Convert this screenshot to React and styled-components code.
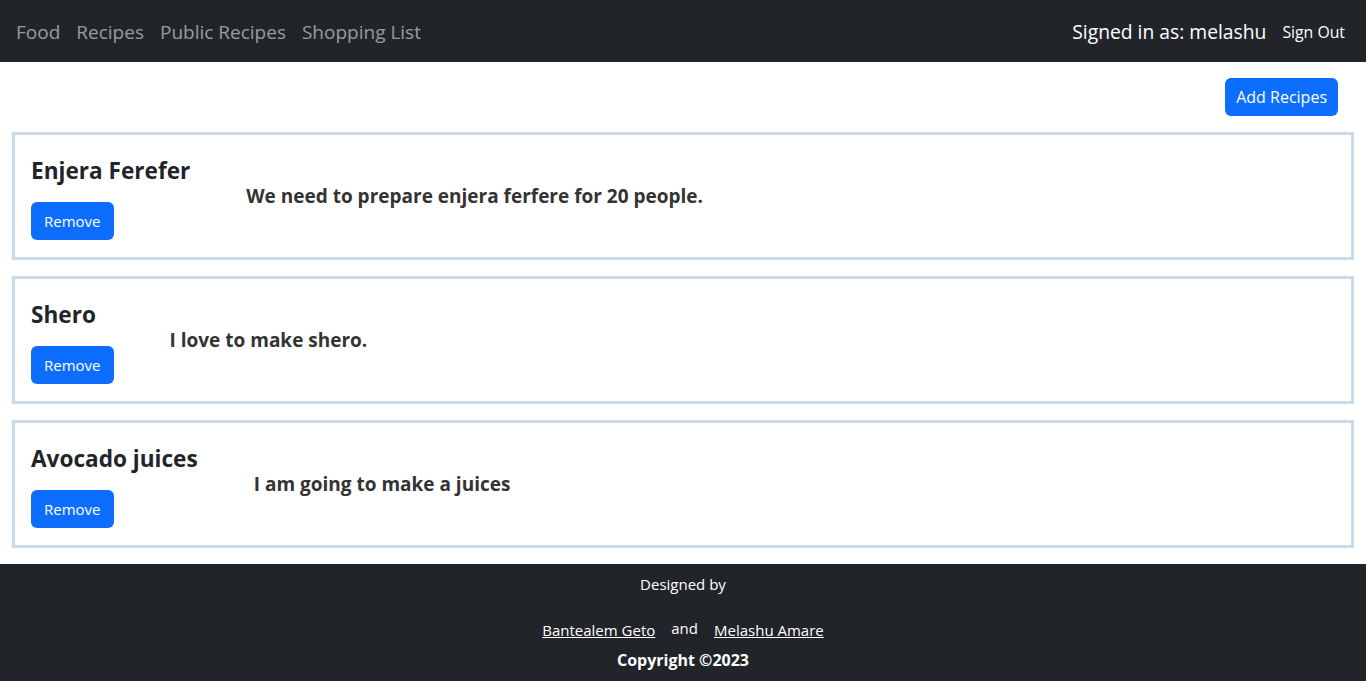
import React from 'react';
import styled, { createGlobalStyle } from 'styled-components';

const GlobalStyle = createGlobalStyle`
  body {
    margin: 0;
    font-family: "Open Sans", "Noto Sans", sans-serif;
    color: #212529;
    background: #fff;
  }
  * {
    box-sizing: border-box;
  }
`;

const NavBar = styled.nav`
  display: flex;
  align-items: center;
  justify-content: space-between;
  height: 62px;
  padding: 1px 9px 0 8px;
  background-color: #212529;
`;

const NavLinks = styled.div`
  display: flex;
  align-items: center;
`;

const NavLink = styled.a`
  padding: 0 8px;
  font-size: 19px;
  color: rgba(255, 255, 255, 0.55);
  text-decoration: none;
  &:hover {
    cursor: pointer;
    color: rgba(255, 255, 255, 0.75);
  }
`;

const UserBox = styled.div`
  display: flex;
  align-items: center;
`;

const SignedIn = styled.span`
  font-size: 19.3px;
  color: #fff;
`;

const SignOut = styled.button`
  margin-left: 4px;
  padding: 6px 12px;
  border: none;
  background: transparent;
  font-family: inherit;
  font-size: 15.8px;
  color: #fff;
  &:hover {
    cursor: pointer;
  }
`;

const Main = styled.main`
  padding: 16px 12px;
`;

const Toolbar = styled.div`
  display: flex;
  justify-content: flex-end;
  padding-right: 16px;
  margin-bottom: 16px;
`;

const BlueButton = styled.button`
  height: 38px;
  padding: 0 ${props => props.small ? '13px' : '11px'};
  border: none;
  border-radius: 6px;
  background-color: #0d6efd;
  font-family: inherit;
  font-size: ${props => props.small ? '15px' : '16px'};
  color: #fff;
  &:hover {
    cursor: pointer;
    background-color: #0b5ed7;
  }
`;

const RecipeList = styled.div`
  display: flex;
  flex-direction: column;
  gap: 16px;
`;

const Card = styled.div`
  display: flex;
  align-items: center;
  gap: 56px;
  height: 128px;
  padding: 16px;
  border: 3px solid #c9dbe7;
`;

const TitleBlock = styled.div`
  display: flex;
  flex-direction: column;
  align-items: flex-start;
  padding-top: 2px;
`;

const Title = styled.h4`
  margin: 3px 0 18px;
  font-size: 22.6px;
  font-weight: 700;
  line-height: 1.2;
  color: #212529;
`;

const Description = styled.h5`
  margin: 0;
  font-size: 19px;
  font-weight: 700;
  line-height: 1.2;
  color: #333;
`;

const Footer = styled.footer`
  display: flex;
  flex-direction: column;
  align-items: center;
  padding: 10px 0 12px;
  background-color: #212529;
  color: #fff;
  font-size: 15px;
`;

const Credits = styled.div`
  display: flex;
  align-items: center;
  gap: 16px;
  margin-top: 24px;
`;

const Author = styled.a`
  color: #fff;
  text-decoration: underline;
  position: relative;
  top: 2px;
`;

const Copyright = styled.div`
  margin-top: 11px;
  font-size: 16px;
  font-weight: 700;
`;

const recipes = [
  { id: 1, name: 'Enjera Ferefer', text: 'We need to prepare enjera ferfere for 20 people.' },
  { id: 2, name: 'Shero', text: 'I love to make shero.' },
  { id: 3, name: 'Avocado juices', text: 'I am going to make a juices' }
];

const App = () => (
  <div>
    <GlobalStyle />
    <NavBar>
      <NavLinks>
        <NavLink>Food</NavLink>
        <NavLink>Recipes</NavLink>
        <NavLink>Public Recipes</NavLink>
        <NavLink>Shopping List</NavLink>
      </NavLinks>
      <UserBox>
        <SignedIn>Signed in as: melashu</SignedIn>
        <SignOut>Sign Out</SignOut>
      </UserBox>
    </NavBar>
    <Main>
      <Toolbar>
        <BlueButton>Add Recipes</BlueButton>
      </Toolbar>
      <RecipeList>
        {recipes.map(recipe => (
          <Card key={recipe.id}>
            <TitleBlock>
              <Title>{recipe.name}</Title>
              <BlueButton small>Remove</BlueButton>
            </TitleBlock>
            <Description>{recipe.text}</Description>
          </Card>
        ))}
      </RecipeList>
    </Main>
    <Footer>
      <span>Designed by</span>
      <Credits>
        <Author>Bantealem Geto</Author>
        <span>and</span>
        <Author>Melashu Amare</Author>
      </Credits>
      <Copyright>Copyright ©2023</Copyright>
    </Footer>
  </div>
);

export default App;
